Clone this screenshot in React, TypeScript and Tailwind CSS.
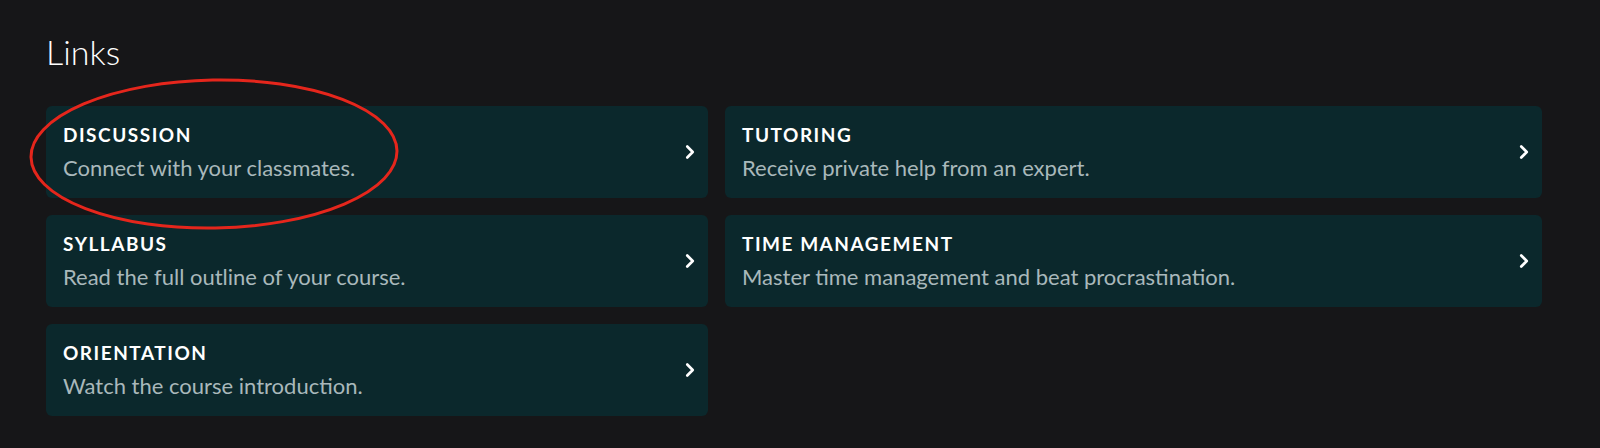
import { ChevronRight } from 'lucide-react'

const links = [
  { title: 'DISCUSSION', desc: 'Connect with your classmates.' },
  { title: 'TUTORING', desc: 'Receive private help from an expert.' },
  { title: 'SYLLABUS', desc: 'Read the full outline of your course.' },
  { title: 'TIME MANAGEMENT', desc: 'Master time management and beat procrastination.' },
  { title: 'ORIENTATION', desc: 'Watch the course introduction.' },
]

function LinkCard({ title, desc }: { title: string; desc: string }) {
  return (
    <a className="flex h-[92px] items-center justify-between rounded-md bg-[#0b282c] pl-[17px] pr-[7px] cursor-pointer">
      <div className="flex flex-col">
        <span className="text-[19px] font-bold leading-[22px] tracking-[0.08em] text-white">{title}</span>
        <span className="mt-[9px] text-[22px] leading-[26px] text-[#a9b8bb]">{desc}</span>
      </div>
      <ChevronRight className="h-[22px] w-[22px] text-white" strokeWidth={2.9} />
    </a>
  )
}

export default function App() {
  return (
    <div className="relative min-h-[448px] w-full bg-[#161618] pl-[46px] pt-[32px]" style={{ fontFamily: 'Lato, "Open Sans", sans-serif' }}>
      <h2 className="text-[34px] font-light leading-[40px] text-white">Links</h2>
      <div className="mt-[34px] grid grid-cols-[662px_817px] gap-x-[17px] gap-y-[17px]">
        {links.map((l) => (
          <LinkCard key={l.title} title={l.title} desc={l.desc} />
        ))}
      </div>
      <svg className="pointer-events-none absolute left-0 top-0" width="440" height="250" viewBox="0 0 440 250">
        <ellipse cx="214" cy="154" rx="183" ry="74" fill="none" stroke="#e5261c" strokeWidth="3" transform="rotate(-1 214 154)" />
      </svg>
    </div>
  )
}
